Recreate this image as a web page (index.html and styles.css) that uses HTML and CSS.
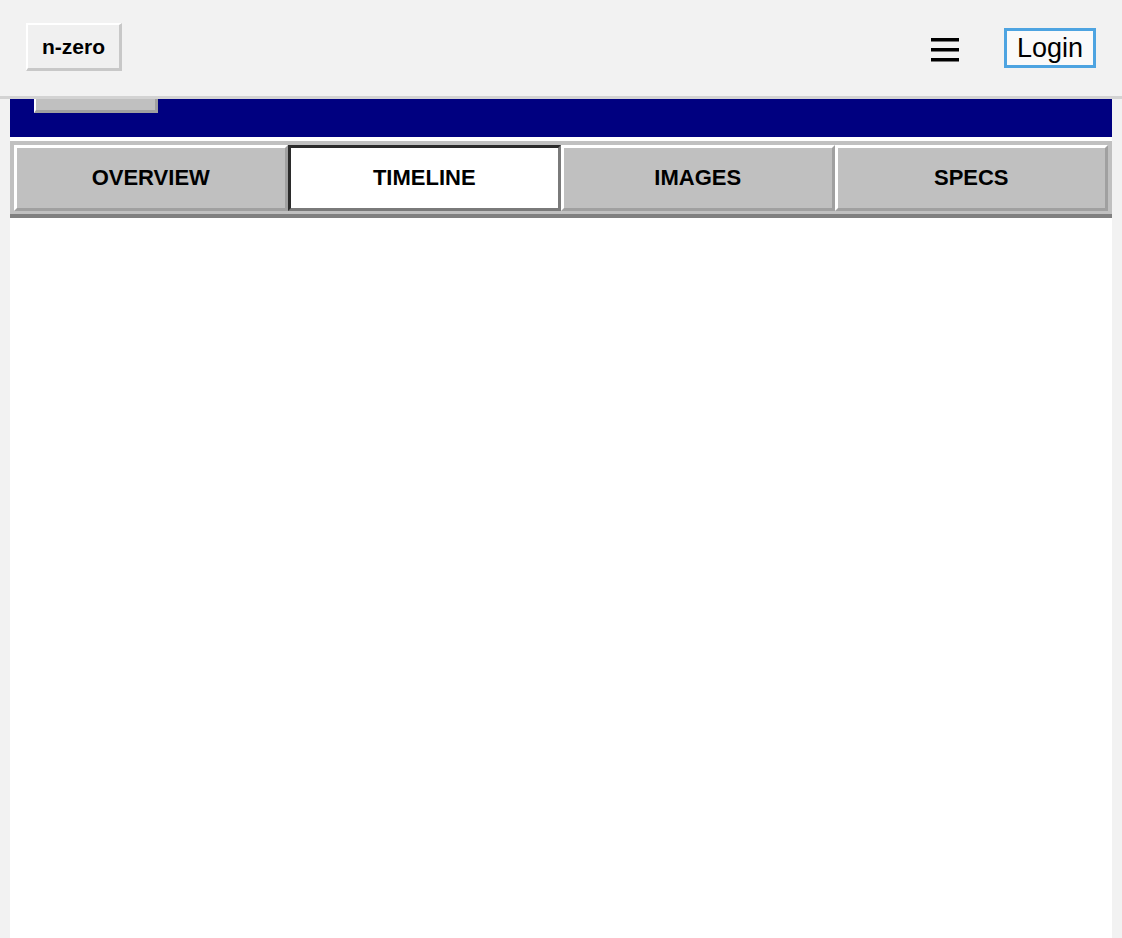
FILE: index.html
```html
<!DOCTYPE html>
<html lang="en">
<head>
<meta charset="utf-8">
<title>n-zero</title>
<link rel="stylesheet" href="styles.css">
</head>
<body>
<header class="topbar">
  <button class="brand">n-zero</button>
  <div class="topbar-right">
    <button class="menu" aria-label="Menu">
      <svg width="28" height="24" viewBox="0 0 28 24"><rect x="0" y="0" width="28" height="3.5" fill="#000"/><rect x="0" y="10" width="28" height="3.5" fill="#000"/><rect x="0" y="20" width="28" height="3.5" fill="#000"/></svg>
    </button>
    <button class="login">Login</button>
  </div>
</header>
<main class="page">
  <div class="banner">
    <div class="banner-btn"></div>
  </div>
  <nav class="tabs">
    <button class="tab">OVERVIEW</button>
    <button class="tab tab-active">TIMELINE</button>
    <button class="tab">IMAGES</button>
    <button class="tab">SPECS</button>
  </nav>
  <section class="content"></section>
</main>
</body>
</html>
```
FILE: styles.css
```css
* { box-sizing: border-box; }
html, body { margin: 0; padding: 0; }
body {
  background: #f2f2f2;
  font-family: "Liberation Sans", Arial, sans-serif;
  color: #000;
  min-height: 938px;
}
button { font-family: inherit; color: #000; cursor: pointer; }

.topbar {
  height: 99px;
  display: flex;
  align-items: center;
  justify-content: space-between;
  padding: 0 26px 3px 26px;
  background: #f2f2f2;
  border-bottom: 3px solid #d3d3d3;
}
.brand {
  width: 96px;
  height: 48px;
  background: #f0f0f0;
  border-style: solid;
  border-width: 2px 3px 3px 2px;
  border-color: #ffffff #c8c8c8 #c8c8c8 #ffffff;
  font-size: 21px;
  font-weight: bold;
  padding: 2px 0 0 0;
}
.topbar-right {
  display: flex;
  align-items: center;
  gap: 45px;
}
.menu {
  background: none;
  border: 0;
  padding: 0;
  width: 28px;
  height: 24px;
  margin-top: 6px;
  display: flex;
}
.login {
  height: 40px;
  padding: 0 10px;
  background: #fafafa;
  border: 3px solid #4ea4e1;
  font-size: 27px;
  line-height: 32px;
  font-weight: normal;
  margin-top: 3px;
}

.page {
  margin: 0 10px;
  background: #ffffff;
  min-height: 839px;
}
.banner {
  height: 38px;
  background: #000080;
  padding-left: 24px;
}
.banner-btn {
  width: 124px;
  height: 14px;
  background: #c0c0c0;
  border-style: solid;
  border-width: 0 3px 3px 2px;
  border-color: #ffffff #a0a0a0 #a0a0a0 #ffffff;
}
.tabs {
  margin-top: 4px;
  display: flex;
  background: #c0c0c0;
  padding: 4px 4px 3px 4px;
  border-bottom: 4px solid #808080;
}
.tab {
  flex: 1 1 0;
  height: 66px;
  background: #c0c0c0;
  border-style: solid;
  border-width: 3px;
  border-color: #ffffff #a0a0a0 #a0a0a0 #ffffff;
  font-size: 22px;
  font-weight: bold;
  padding: 0;
}
.tab-active {
  background: #ffffff;
  border-color: #2b2b2b #7a7a7a #7a7a7a #2b2b2b;
}
.content {
  min-height: 700px;
}
```
